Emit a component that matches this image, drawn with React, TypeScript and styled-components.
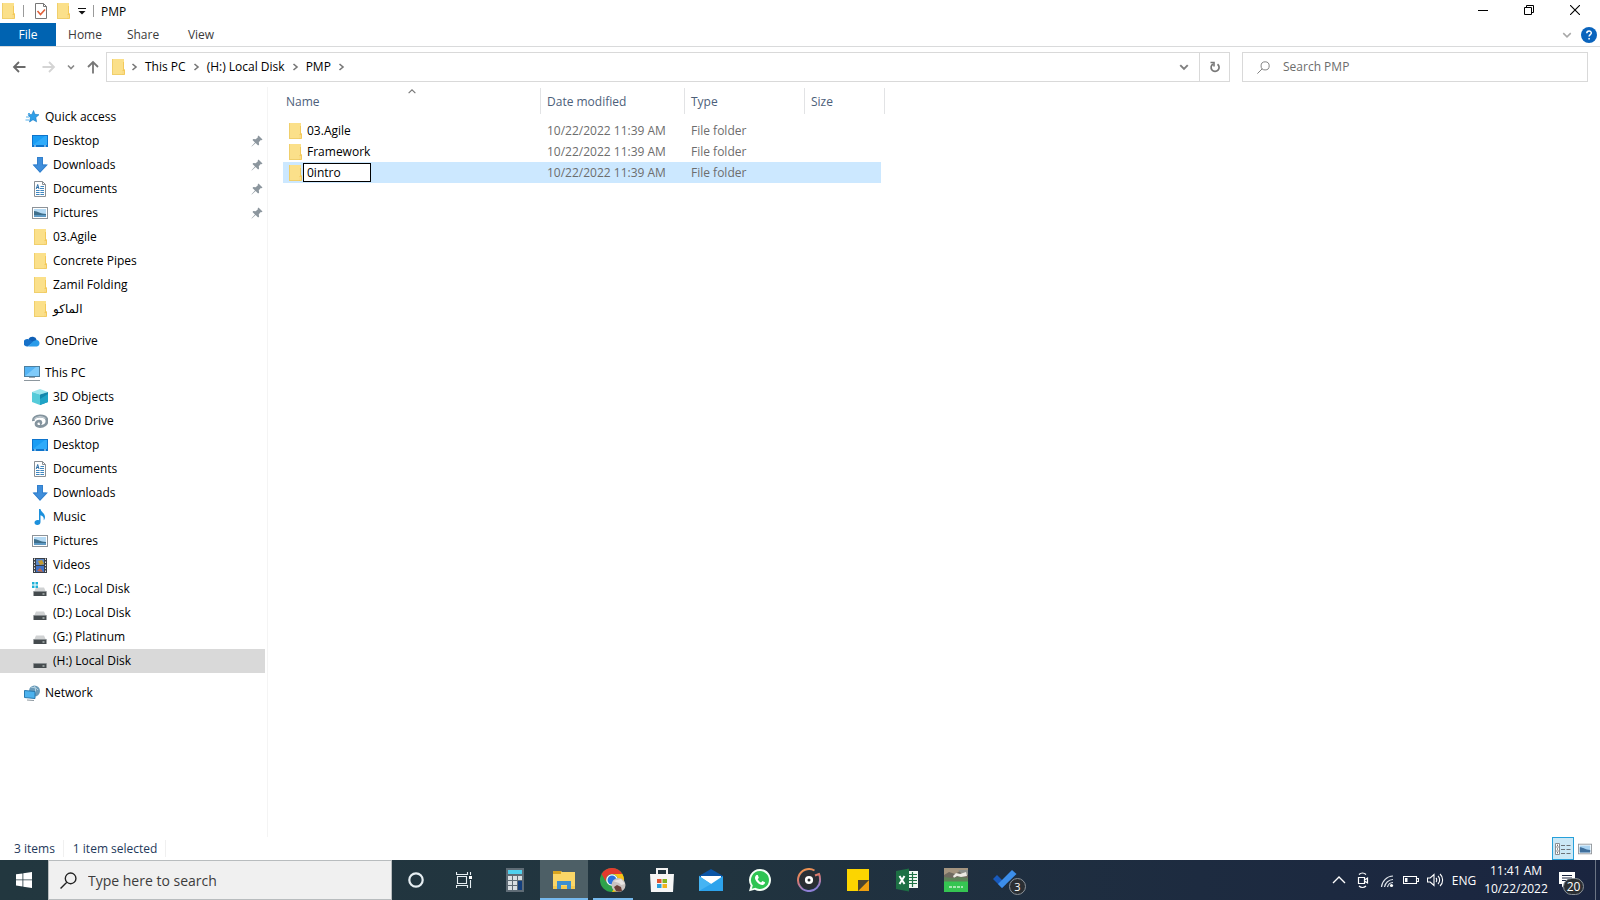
import React from "react";
import styled, { createGlobalStyle } from "styled-components";

const GlobalStyle = createGlobalStyle`
  * { box-sizing: border-box; }
  body { margin: 0; background: #fff; }
  body, button, input { font-family: "Open Sans", "Noto Sans", "DejaVu Sans", sans-serif; font-size: 12px; }
  button { border: 0; padding: 0; background: transparent; color: inherit; }
  svg { display: block; flex: none; }
`;

/* ---------- icons ---------- */

const FolderIcon = () => (
  <svg width="16" height="16" viewBox="0 0 16 16">
    <path d="M2 0h12v10.500h1V16H2z" fill="#fbe08a" />
    <path d="M2 0h1v16H2zM2 15h12v1H2z" fill="#f0cf6c" />
    <path d="M13 3v8l-1 1v3.500h3v-5h-1V3z" fill="#f3c95a" />
    <path d="M12.500 12h1v3h-1z" fill="#ffeeb5" />
  </svg>
);

const Icon16 = ({ children }: { children: React.ReactNode }) => (
  <svg width="16" height="16" viewBox="0 0 16 16">{children}</svg>
);

const StarIcon = () => (
  <Icon16>
    <path d="M9.500 1.500l1.400 3.800 4.100.4-3.200 2.800.8 4.300-3.600-2.100L5.500 13l.9-4.200-2.300-3.100 3.800-.3z" fill="#2f9fe8" stroke="#1579c2" strokeWidth=".6" />
    <path d="M2 8h3M1.500 11h3.500M4 4.500h2" stroke="#55b1ec" strokeWidth="1.200" />
  </Icon16>
);
const DesktopIcon = () => (
  <Icon16>
    <rect y="2" width="16" height="12" fill="#0e74cc" />
    <rect x="1" y="3" width="14" height="9" fill="#1a9df4" />
    <path d="M1 12L13 3h2v9z" fill="#2fabfa" />
    <path d="M2 13h2M12 13h2" stroke="#cfe9fb" />
  </Icon16>
);
const DownloadIcon = () => (
  <Icon16>
    <path d="M5 0h6v7.500h5L8 16 .5 7.500H5z" fill="#3f8edb" />
    <path d="M5.500.5h5V8h4L8 15 1.600 8h3.900z" fill="none" stroke="#2f7bc8" strokeWidth=".8" />
  </Icon16>
);
const DocumentIcon = () => (
  <Icon16>
    <path d="M2.500.5h8l3 3v12h-11z" fill="#fdfdfd" stroke="#8a8f94" />
    <path d="M10.500.5v3h3" fill="none" stroke="#8a8f94" />
    <path d="M8.500 5.500H12M8 7.500h4M4 9.500h8M4 11.500h8M4 13.500h8" stroke="#3f86bf" />
    <path d="M4.200 8l1.500-4.500L7 8M4.800 6.500h2" stroke="#2b6ea8" fill="none" />
    <path d="M8 9v5" stroke="#fdfdfd" strokeWidth=".8" />
  </Icon16>
);
const PictureIcon = () => (
  <Icon16>
    <rect x=".5" y="2.500" width="15" height="11" fill="#fff" stroke="#8d9399" />
    <rect x="2" y="4" width="12" height="8" fill="#b5daf4" />
    <path d="M2 6c4 0 6 3 12 3v3H2z" fill="#3f6f8c" />
    <path d="M2 10h12v2H2z" fill="#5f9ac4" />
  </Icon16>
);
const OneDriveIcon = () => (
  <Icon16>
    <path d="M4.500 6a4.500 4.500 0 0 1 8.300 1.200L8 11z" fill="#0f5fb5" />
    <path d="M4 6a3.800 3.800 0 1 0-.3 7.500L10 9z" fill="#1671c9" />
    <path d="M12.600 7a3.300 3.300 0 0 1 .3 6.500H4L9.500 8z" fill="#2a9cea" />
  </Icon16>
);
const ComputerIcon = () => (
  <Icon16>
    <rect x=".5" y="1.500" width="15" height="10" fill="#54b4f5" stroke="#4d7f9f" />
    <path d="M1 11L12 2h3v9z" fill="#7fcbfa" />
    <path d="M5 12.500h6" stroke="#9aa5ad" />
    <path d="M0 15.500h16" stroke="#8d979e" />
  </Icon16>
);
const CubeIcon = () => (
  <Icon16>
    <path d="M0 3l8-3 8 3-8 2.500z" fill="#9be6ee" />
    <path d="M0 3l8 2.500V16l-8-3z" fill="#55cbd9" />
    <path d="M16 3L8 5.500V16l8-3z" fill="#1287ac" />
    <path d="M8 10l8-5v8l-8 3z" fill="#1fa3c6" />
  </Icon16>
);
const DriveLoopIcon = () => (
  <Icon16>
    <path d="M1.500 8C1 5 4 3 8 3c4.500 0 7 2 7 5 0 3.200-3 5.500-7 5.500-2.500 0-4-1-4-2.700C4 8.800 6 8 7.500 8.200c1.800.3 1.800 2.200.3 2.600" fill="none" stroke="#84949e" strokeWidth="2.800" />
    <path d="M2 6.500C4 3.500 9 2.500 13.500 5.500" fill="none" stroke="#c2ccd2" strokeWidth="1.200" />
  </Icon16>
);
const MusicIcon = () => (
  <Icon16>
    <path d="M7 0h1.500c.3 3 4.500 4 4.500 8 0 1.500-.6 2.600-1.300 3.300.6-3-1-4.300-3.200-5V13c0 1.700-1.300 3-3.200 3S2.500 15 2.500 13.500 4 11 5.500 11c.6 0 1.100.1 1.500.3z" fill="#1c90dc" />
  </Icon16>
);
const VideoIcon = () => (
  <Icon16>
    <rect x="1" y="1" width="14" height="15" fill="#3a3f45" />
    <path d="M2.500 1.500v14M13.500 1.500v14" stroke="#e4e6e8" strokeDasharray="1.500 1.500" />
    <rect x="4" y="2" width="8" height="6" fill="#5a87c6" />
    <rect x="4" y="9" width="8" height="6" fill="#3f72c8" />
    <path d="M6 4l4-1 2 4-4 1z" fill="#c49a2e" />
    <path d="M5 14l3-3 3 4z" fill="#c4683f" />
  </Icon16>
);
const DiskIcon = ({ windows = false, low = false }: { windows?: boolean; low?: boolean }) => (
  <Icon16>
    {!low && <path d="M4 6.500h8L14 11H2z" fill="#d0d2d3" />}
    <path d="M1.500 10.500h13V15h-13z" fill="#454b4e" />
    <path d="M1.500 10.500h13" stroke="#8a8f92" />
    <path d="M10.500 13h2" stroke="#dfe8e4" />
    {windows && <path d="M0 1h2.500v2.500H0zM3.500 1H6v2.500H3.500zM0 4.500h2.500V7H0zM3.500 4.500H6V7H3.500z" fill="#1fb0d6" />}
  </Icon16>
);
const NetworkIcon = () => (
  <Icon16>
    <circle cx="10.500" cy="6" r="5.500" fill="#6a9ab8" />
    <path d="M7 2c3 1 5 0 7 3M10 .5c2 3 2 6 0 9" stroke="#b8d6e6" fill="none" />
    <path d="M.5 5.500l10.500 1v7l-10.500-1z" fill="#4cb2ee" stroke="#2879ae" />
    <path d="M3 15l7 .5" stroke="#8c979e" />
  </Icon16>
);
const PinIcon = () => (
  <svg width="12" height="12" viewBox="0 0 12 12">
    <path d="M7.500.5l4 4-1 .8-.7-.2-2 2.200.3 2.400-1 .8L4.600 8 .8 11.500l-.3-.3L4 7.400 1.500 5l.8-1 2.400.3L6.900 2.200l-.2-.8z" fill="#8c969e" />
  </svg>
);
const Chevron = ({ size = 8, dir = "right", color = "#777", width = 1.6 }: { size?: number; dir?: "right" | "down" | "up"; color?: string; width?: number }) => {
  const d = { right: "M2.500 1L6 4 2.500 7", down: "M1 2.500L4 5.500 7 2.500", up: "M1 5.500L4 2.500 7 5.500" }[dir];
  return <svg width={size} height={size} viewBox="0 0 8 8"><path d={d} fill="none" stroke={color} strokeWidth={width} /></svg>;
};
const ArrowIcon = ({ dir, color }: { dir: "left" | "right" | "up"; color: string }) => {
  const d = { left: "M13.500 7H2M7 2L2 7l5 5", right: "M.5 7H12M7 2l5 5-5 5", up: "M7 13.500V2M2 7l5-5 5 5" }[dir];
  return <svg width="14" height="14" viewBox="0 0 14 14"><path d={d} fill="none" stroke={color} strokeWidth="1.800" /></svg>;
};
const LensIcon = ({ size, color, width }: { size: number; color: string; width: number }) => (
  <svg width={size} height={size} viewBox="0 0 16 16"><path d="M6.400 9.600L.5 15.500M5 6a5 5 0 1 1 10 0A5 5 0 0 1 5 6z" fill="none" stroke={color} strokeWidth={width} /></svg>
);

/* ---------- window frame ---------- */

const Screen = styled.div`
  min-height: 100vh;
  display: flex;
  flex-direction: column;
  color: #000;
`;
const TitleBar = styled.header`
  height: 23px;
  display: flex;
  align-items: center;
  padding: 0 2px 1px 0;
`;
const Tool = styled.button<{ $w?: number }>`
  width: ${(p) => p.$w ?? 16}px;
  display: flex;
  justify-content: center;
`;
const Rule = styled.span<{ $l: number; $r: number }>`
  width: 1px;
  height: 12px;
  background: #9a9a9a;
  margin: 0 ${(p) => p.$r}px 0 ${(p) => p.$l}px;
`;
const QuickTools = styled.div`
  display: flex;
  align-items: center;
  gap: 6px;
`;
const WindowTitle = styled.h1`
  margin: 0;
  flex: 1;
  font-size: 12px;
  font-weight: 400;
`;
const FrameButton = styled.button`
  width: 46px;
  height: 22px;
  display: flex;
  align-items: center;
  justify-content: center;
  padding-bottom: 2px;
`;
const Ribbon = styled.nav`
  height: 24px;
  display: flex;
  align-items: stretch;
  border-bottom: 1px solid #d9dadb;
  padding-right: 3px;
`;
const RibbonTab = styled.button<{ $active?: boolean }>`
  width: ${(p) => (p.$active ? 56 : 58)}px;
  background: ${(p) => (p.$active ? "#0063b1" : "transparent")};
  color: ${(p) => (p.$active ? "#fff" : "#3b3b3b")};
`;
const RibbonEnd = styled.div`
  margin-left: auto;
  display: flex;
  align-items: center;
  gap: 9px;
`;
const NavBar = styled.div`
  height: 40px;
  display: flex;
  align-items: center;
  padding: 0 12px;
`;
const NavButtons = styled.div`
  width: 94px;
  display: flex;
  align-items: center;
  gap: 11px;
`;
const NavButton = styled.button<{ $spaced?: boolean }>`
  margin-left: ${(p) => (p.$spaced ? 5 : 0)}px;
`;
const AddressBox = styled.div`
  flex: 1;
  height: 30px;
  display: flex;
  align-items: center;
  border: 1px solid #d9d9d9;
  padding-left: 3px;
`;
const Crumbs = styled.ol`
  flex: 1;
  display: flex;
  align-items: center;
  gap: 7px;
  list-style: none;
  margin: 0;
  padding: 0 0 0 4px;
`;
const Crumb = styled.li`
  display: flex;
  align-items: center;
  gap: 6px;
`;
const AddressButton = styled.button<{ $divided?: boolean }>`
  width: 30px;
  height: 28px;
  display: flex;
  align-items: center;
  justify-content: center;
  border-left: ${(p) => (p.$divided ? "1px solid #d9d9d9" : "0")};
`;
const SearchBox = styled.label`
  width: 346px;
  height: 30px;
  margin-left: 12px;
  display: flex;
  align-items: center;
  gap: 13px;
  border: 1px solid #d9d9d9;
  padding-left: 14px;
`;
const SearchInput = styled.input`
  flex: 1;
  min-width: 0;
  border: 0;
  padding: 0 0 2px;
  outline: 0;
  background: transparent;
  &::placeholder { color: #6d6d6d; opacity: 1; }
`;

/* ---------- body ---------- */

const Body = styled.div`
  flex: 1;
  display: flex;
`;
const Sidebar = styled.nav`
  width: 268px;
  padding: 18px 2px 0 0;
  border-right: 1px solid #f4f4f4;
`;
const Group = styled.ul`
  list-style: none;
  margin: 0 0 8px;
  padding: 0;
`;
const TreeItem = styled.li<{ $root?: boolean; $selected?: boolean }>`
  height: 24px;
  display: flex;
  align-items: center;
  gap: 5px;
  padding: 0 2px 0 ${(p) => (p.$root ? 24 : 32)}px;
  background: ${(p) => (p.$selected ? "#d9d9d9" : "transparent")};
`;
const TextLink = styled.a`
  flex: 1;
  padding-bottom: 2px;
  color: inherit;
  text-decoration: none;
`;
const Pane = styled.main`
  flex: 1;
  padding-left: 15px;
`;
const FileTable = styled.table`
  width: 602px;
  table-layout: fixed;
  border-collapse: separate;
  border-spacing: 0;
`;
const HeadCell = styled.th<{ $w: number; $first?: boolean }>`
  position: relative;
  width: ${(p) => p.$w}px;
  height: 33px;
  padding: 0 0 4px ${(p) => (p.$first ? 3 : 6)}px;
  text-align: left;
  font-weight: 400;
  color: #4c607a;
  background: linear-gradient(#e2e3e5, #e2e3e5) right 1px / 1px 26px no-repeat;
`;
const SortMark = styled.span`
  position: absolute;
  top: 0;
  left: 50%;
  transform: translateX(-50%);
`;
const FileRow = styled.tr<{ $selected?: boolean }>`
  height: 21px;
  color: #6d6d6d;
  td { background-color: ${(p) => (p.$selected ? "#cce8ff" : "transparent")}; }
`;
const Cell = styled.td`
  padding: 0 0 0 6px;
  line-height: 20px;
  &:last-child { border-right: 4px solid transparent; background-clip: padding-box; }
`;
const NameCell = styled.div<{ $editing?: boolean }>`
  display: flex;
  align-items: center;
  gap: ${(p) => (p.$editing ? 0 : 4)}px;
  height: 21px;
  margin-left: -2px;
  color: #000;
`;
const RenameInput = styled.input`
  width: 68px;
  height: 19px;
  border: 1px solid #000;
  padding: 0 3px;
  outline: 0;
  background: #fff;
`;
const StatusBar = styled.footer`
  height: 23px;
  display: flex;
  align-items: center;
  padding: 0 4px 0 14px;
  color: #1e395b;
`;
const StatusText = styled.span`
  padding-right: 8px;
  margin-right: 9px;
  border-right: 1px solid #f0f0f0;
`;
const ViewButtons = styled.div`
  margin-left: auto;
  display: flex;
  align-items: center;
`;
const ViewButton = styled.button<{ $on?: boolean }>`
  width: 22px;
  height: 23px;
  display: flex;
  align-items: center;
  justify-content: center;
  border: ${(p) => (p.$on ? "1px solid #26a0da" : "0")};
  background: ${(p) => (p.$on ? "#cbe8f6" : "transparent")};
`;

/* ---------- taskbar ---------- */

const Taskbar = styled.div`
  height: 40px;
  display: flex;
  align-items: stretch;
  background: linear-gradient(90deg, #22373f 0%, #21343f 45%, #1d2b40 75%, #1a2540 100%);
  color: #fff;
`;
const TaskButton = styled.button<{ $active?: boolean }>`
  position: relative;
  width: 48px;
  display: flex;
  align-items: center;
  justify-content: center;
  background: ${(p) => (p.$active ? "#4d5f66" : "transparent")};
`;
const Running = styled.span<{ $inset: number }>`
  position: absolute;
  bottom: 0;
  left: ${(p) => p.$inset}px;
  right: ${(p) => p.$inset}px;
  height: 2px;
  background: #76b9ed;
`;
const TaskSearch = styled.label`
  width: 344px;
  display: flex;
  align-items: center;
  gap: 11px;
  padding-left: 11px;
  background: #f0f0f0;
  border: 1px solid #b8bcbe;
`;
const TaskSearchInput = styled(SearchInput)`
  padding: 0;
  font-size: 14px;
  &::placeholder { color: #3c3c3c; opacity: 1; }
`;
const Apps = styled.div`
  display: flex;
  gap: 1px;
  margin-left: 3px;
`;
const Badge = styled.span<{ $wide?: boolean }>`
  position: absolute;
  left: ${(p) => (p.$wide ? 12 : 28)}px;
  top: 18px;
  min-width: ${(p) => (p.$wide ? 21 : 17)}px;
  height: 17px;
  border: 1px solid #8b9299;
  border-radius: 9px;
  background: #2b2f33;
  font-size: ${(p) => (p.$wide ? 12 : 11)}px;
  line-height: 15px;
  text-align: center;
`;
const Tray = styled.div`
  margin-left: auto;
  display: flex;
  align-items: stretch;
`;
const TrayButton = styled.button<{ $w?: number }>`
  position: relative;
  width: ${(p) => p.$w ?? 24}px;
  display: flex;
  align-items: center;
  justify-content: center;
`;
const NoticeButton = styled(TrayButton)`
  width: 32px;
  margin-right: 12px;
`;
const Clock = styled.time`
  width: 70px;
  display: flex;
  flex-direction: column;
  justify-content: center;
  text-align: center;
  line-height: 18px;
`;
const ShowDesktop = styled.button`
  width: 5px;
  border-left: 1px solid #6b7484;
`;

type Node = { label: string; icon: React.ReactNode; pinned?: boolean; selected?: boolean };

const groups: Node[][] = [
  [
    { label: "Quick access", icon: <StarIcon /> },
    { label: "Desktop", icon: <DesktopIcon />, pinned: true },
    { label: "Downloads", icon: <DownloadIcon />, pinned: true },
    { label: "Documents", icon: <DocumentIcon />, pinned: true },
    { label: "Pictures", icon: <PictureIcon />, pinned: true },
    { label: "03.Agile", icon: <FolderIcon /> },
    { label: "Concrete Pipes", icon: <FolderIcon /> },
    { label: "Zamil Folding", icon: <FolderIcon /> },
    { label: "الماكو", icon: <FolderIcon /> },
  ],
  [{ label: "OneDrive", icon: <OneDriveIcon /> }],
  [
    { label: "This PC", icon: <ComputerIcon /> },
    { label: "3D Objects", icon: <CubeIcon /> },
    { label: "A360 Drive", icon: <DriveLoopIcon /> },
    { label: "Desktop", icon: <DesktopIcon /> },
    { label: "Documents", icon: <DocumentIcon /> },
    { label: "Downloads", icon: <DownloadIcon /> },
    { label: "Music", icon: <MusicIcon /> },
    { label: "Pictures", icon: <PictureIcon /> },
    { label: "Videos", icon: <VideoIcon /> },
    { label: "(C:) Local Disk", icon: <DiskIcon windows /> },
    { label: "(D:) Local Disk", icon: <DiskIcon /> },
    { label: "(G:) Platinum", icon: <DiskIcon /> },
    { label: "(H:) Local Disk", icon: <DiskIcon low />, selected: true },
  ],
  [{ label: "Network", icon: <NetworkIcon /> }],
];

const files = [
  { name: "03.Agile" },
  { name: "Framework" },
  { name: "0intro", editing: true },
];

const App24 = ({ children }: { children: React.ReactNode }) => (
  <svg width="24" height="24" viewBox="0 0 24 24">{children}</svg>
);

const apps: { name: string; icon: React.ReactNode; active?: boolean; running?: number; badge?: string }[] = [
  {
    name: "Calculator",
    icon: (
      <App24>
        <rect x="3" width="18" height="24" fill="#5f6c76" />
        <rect x="5" y="2" width="14" height="4" fill="#4fd0ee" />
        <path d="M5 8h4v4H5zM10 8h4v4h-4zM15 8h4v4h-4zM5 13h4v4H5zM10 13h4v4h-4zM5 18h4v4H5zM10 18h4v4h-4z" fill="#d9dfe3" />
        <rect x="15" y="13" width="4" height="9" fill="#143f7d" />
      </App24>
    ),
  },
  {
    name: "File Explorer",
    active: true,
    running: 0,
    icon: (
      <App24>
        <path d="M1 3h8l1 1h13v17H1z" fill="#fbd667" />
        <path d="M1 3h8v3H1z" fill="#d9a520" />
        <path d="M5 13h14v8h-4v-4H9v4H5z" fill="#3d8fd1" />
        <path d="M1 18h4v3H1zM19 18h4v3h-4zM9 18h6v3H9z" fill="#f5c94e" />
      </App24>
    ),
  },
  {
    name: "Chrome",
    running: 4,
    icon: (
      <svg width="26" height="24" viewBox="0 0 26 24">
        <circle cx="12" cy="12" r="12" fill="#2ea24b" />
        <path d="M1.600 6A12 12 0 0 1 22.400 6H12a6 6 0 0 0-5.200 9z" fill="#e33b2e" />
        <path d="M22.400 6A12 12 0 0 1 12 24l5.200-9A6 6 0 0 0 12 6z" fill="#fbc116" />
        <circle cx="12" cy="12" r="5.800" fill="#fff" />
        <circle cx="12" cy="12" r="4.500" fill="#2a73e0" />
        <circle cx="18.500" cy="17" r="7" fill="#c9c3c1" />
        <path d="M13 13l8-2 4 5-4 1-2-2z" fill="#e8e5e3" />
        <path d="M14 19l3-2 4 2 1 4-3 .8-3-.8z" fill="#6a4038" />
      </svg>
    ),
  },
  {
    name: "Microsoft Store",
    icon: (
      <App24>
        <path d="M7 6V1h10v5" fill="none" stroke="#f2f2f2" strokeWidth="2" />
        <path d="M0 6h24l-1 18H1z" fill="#f6f6f6" />
        <path d="M7 11h4.500v4H7z" fill="#e2532f" />
        <path d="M12.500 11H17v4h-4.500z" fill="#82b41f" />
        <path d="M7 16h4.500v4H7z" fill="#2aa0dc" />
        <path d="M12.500 16H17v4h-4.500z" fill="#f3b31d" />
      </App24>
    ),
  },
  {
    name: "Mail",
    icon: (
      <App24>
        <path d="M0 8l12-7 12 7v15H0z" fill="#0a54a5" />
        <path d="M2 8h20v8H2z" fill="#fff" />
        <path d="M0 8l12 8L24 8v15H0z" fill="#2da3ec" />
        <path d="M0 8l12 8-12 7z" fill="#45b4f3" />
      </App24>
    ),
  },
  {
    name: "WhatsApp",
    icon: (
      <App24>
        <path d="M12 1a11 11 0 1 1-5.200 20.700L1 23.200l1.600-5.600A11 11 0 0 1 12 1z" fill="#f5fff7" />
        <path d="M12 3a9 9 0 1 1-4.700 16.700l-3.500 1 1-3.300A9 9 0 0 1 12 3z" fill="#2fc453" />
        <path d="M8.500 7l1.300 0 1 2.700-1.100 1.500c.8 1.600 1.900 2.500 3.400 3.200l1.300-1.400 2.600 1.200c.2 1.800-1.300 2.800-2.600 2.800-3.700-.3-7.100-4-7.400-7 0-1.300.7-2.400 1.500-3z" fill="#fff" />
      </App24>
    ),
  },
  {
    name: "Music",
    icon: (
      <App24>
        <defs>
          <linearGradient id="ring" x1="0" y1="0" x2=".3" y2="1">
            <stop offset="0" stopColor="#f49a4a" />
            <stop offset=".5" stopColor="#d9796f" />
            <stop offset="1" stopColor="#8d7fd6" />
          </linearGradient>
        </defs>
        <circle cx="12" cy="12" r="9" fill="#2b2e33" />
        <path d="M17.500 2.500A11 11 0 1 0 23 11c0-2-.3-3.500-1-5l-4 1.500" fill="none" stroke="url(#ring)" strokeWidth="2" />
        <circle cx="12" cy="12" r="2.800" fill="none" stroke="#fff" strokeWidth="2.600" />
      </App24>
    ),
  },
  {
    name: "Sticky Notes",
    icon: (
      <App24>
        <path d="M1 1h22v11l-11 11H1z" fill="#fcd500" />
        <path d="M23 12v11H12z" fill="#eea010" />
        <path d="M12 12h11L12 23z" fill="#4b4430" />
      </App24>
    ),
  },
  {
    name: "Excel",
    icon: (
      <App24>
        <rect x="12" y="3" width="11" height="17" fill="#f1f8f3" />
        <path d="M13 6.500h9M13 9.500h9M13 12.500h9M13 15.500h9M17.500 4v15" stroke="#217346" strokeWidth="1.200" />
        <path d="M1 3l13-2.500v23L1 21z" fill="#1d7044" />
        <path d="M4.500 8l5 8M9.500 8l-5 8" stroke="#fff" strokeWidth="2" />
      </App24>
    ),
  },
  {
    name: "Garden photo",
    icon: (
      <App24>
        <rect width="24" height="24" fill="#6f6a60" />
        <path d="M0 0h24v4l-8-1-5 3-6-2-5 3z" fill="#a49580" />
        <path d="M14 2h10v5l-6-1z" fill="#8b8f8a" />
        <path d="M9 8l3-3 4 1 6-2 1 4-6 1-4-1-3 2z" fill="#eceae4" />
        <path d="M0 9l8 1 8-1 8 1v4H0z" fill="#5f8259" />
        <path d="M0 13.500h24V24H0z" fill="#35c552" />
        <path d="M5 19h14" stroke="#c9f2ce" strokeWidth="1.500" strokeDasharray="3 1" />
      </App24>
    ),
  },
  {
    name: "To Do",
    badge: "3",
    icon: (
      <App24>
        <path d="M0 11l4-4 9 9-4 4z" fill="#185abd" />
        <path d="M9 20l-4-4L19 2l4.500 4z" fill="#3c8eea" />
      </App24>
    ),
  },
];

export default function App() {
  return (
    <Screen>
      <GlobalStyle />
      <TitleBar>
        <FolderIcon />
        <Rule $l={7} $r={9} />
        <QuickTools>
          <Tool aria-label="Properties">
            <Icon16>
              <path d="M2.500.5h8l3 3v12h-11z" fill="#fff" stroke="#777" />
              <path d="M10.500.5v3h3" fill="none" stroke="#777" />
              <path d="M4.500 8l3 3.500 4.500-5" fill="none" stroke="#e0603a" strokeWidth="1.600" />
            </Icon16>
          </Tool>
          <Tool aria-label="New folder"><FolderIcon /></Tool>
          <Tool aria-label="Customize" $w={10}>
            <svg width="8" height="8" viewBox="0 0 8 8"><path d="M0 1.500h8" stroke="#111" /><path d="M.5 4h7L4 7.500z" fill="#111" /></svg>
          </Tool>
        </QuickTools>
        <Rule $l={6} $r={7} />
        <WindowTitle>PMP</WindowTitle>
        <FrameButton aria-label="Minimize"><svg width="10" height="10" viewBox="0 0 10 10"><path d="M0 5.500h10" stroke="#000" /></svg></FrameButton>
        <FrameButton aria-label="Restore"><svg width="10" height="10" viewBox="0 0 10 10"><path d="M.5 2.500h7v7h-7zM2.500 2.500v-2h7v7h-2" fill="none" stroke="#000" /></svg></FrameButton>
        <FrameButton aria-label="Close"><svg width="10" height="10" viewBox="0 0 10 10"><path d="M0 0l10 10M10 0L0 10" stroke="#000" strokeWidth="1.100" /></svg></FrameButton>
      </TitleBar>
      <Ribbon>
        <RibbonTab $active>File</RibbonTab>
        <RibbonTab>Home</RibbonTab>
        <RibbonTab>Share</RibbonTab>
        <RibbonTab>View</RibbonTab>
        <RibbonEnd>
          <button aria-label="Expand ribbon"><Chevron size={10} dir="down" color="#a8a8a8" width={1.2} /></button>
          <button aria-label="Help">
            <Icon16>
              <circle cx="8" cy="8" r="8" fill="#0a64bd" />
              <path d="M5.800 6.300c0-3 4.500-3 4.500-.3 0 1.600-2.200 1.600-2.200 3.500M8.100 11v1.600" fill="none" stroke="#fff" strokeWidth="1.500" />
            </Icon16>
          </button>
        </RibbonEnd>
      </Ribbon>
      <NavBar>
        <NavButtons>
          <NavButton aria-label="Back"><ArrowIcon dir="left" color="#6a6a6a" /></NavButton>
          <NavButton aria-label="Forward" $spaced><ArrowIcon dir="right" color="#d4d4d4" /></NavButton>
          <NavButton aria-label="Recent locations"><Chevron dir="down" color="#888" /></NavButton>
          <NavButton aria-label="Up"><ArrowIcon dir="up" color="#777" /></NavButton>
        </NavButtons>
        <AddressBox>
          <FolderIcon />
          <Crumbs>
            <Chevron />
            {["This PC", "(H:) Local Disk", "PMP"].map((c) => (
              <Crumb key={c}><TextLink href="#">{c}</TextLink><Chevron /></Crumb>
            ))}
          </Crumbs>
          <AddressButton aria-label="Previous locations"><Chevron size={10} dir="down" color="#808080" width={1.6} /></AddressButton>
          <AddressButton aria-label="Refresh" $divided>
            <svg width="12" height="12" viewBox="0 0 12 12"><path d="M4 3A4 4 0 1 0 8.500 3.200" fill="none" stroke="#777" strokeWidth="1.700" /><path d="M1.500 1.500H5v4" fill="none" stroke="#777" strokeWidth="1.600" /></svg>
          </AddressButton>
        </AddressBox>
        <SearchBox>
          <LensIcon size={13} color="#808080" width={1.2} />
          <SearchInput aria-label="Search PMP" placeholder="Search PMP" />
        </SearchBox>
      </NavBar>

      <Body>
        <Sidebar aria-label="Folders">
          {groups.map((g, gi) => (
            <Group key={gi}>
              {g.map((n, i) => (
                <TreeItem key={i} $root={i === 0} $selected={n.selected}>
                  {n.icon}
                  <TextLink href="#">{n.label}</TextLink>
                  {n.pinned && <PinIcon />}
                </TreeItem>
              ))}
            </Group>
          ))}
        </Sidebar>
        <Pane>
          <FileTable>
            <thead>
              <tr>
                <HeadCell $w={258} $first>Name<SortMark><Chevron size={9} dir="up" color="#777" width={1} /></SortMark></HeadCell>
                <HeadCell $w={144}>Date modified</HeadCell>
                <HeadCell $w={120}>Type</HeadCell>
                <HeadCell $w={80}>Size</HeadCell>
              </tr>
            </thead>
            <tbody>
              {files.map((f) => (
                <FileRow key={f.name} $selected={f.editing}>
                  <Cell>
                    <NameCell $editing={f.editing}>
                      <FolderIcon />
                      {f.editing ? <RenameInput aria-label="Folder name" defaultValue={f.name} /> : f.name}
                    </NameCell>
                  </Cell>
                  <Cell>10/22/2022 11:39 AM</Cell>
                  <Cell>File folder</Cell>
                  <Cell />
                </FileRow>
              ))}
            </tbody>
          </FileTable>
        </Pane>
      </Body>

      <StatusBar>
        <StatusText>3 items</StatusText>
        <StatusText>1 item selected</StatusText>
        <ViewButtons>
          <ViewButton aria-label="Details view" $on>
            <Icon16>
              <path d="M.5 2.500h4v11h-4zM.5 6h4M.5 10h4" fill="#fff" stroke="#8a8f94" />
              <path d="M2 4.200h1M2 8h1M2 11.800h1" stroke="#333" />
              <path d="M6 4.500h4M11.500 4.500h4M6 8.500h4M11.500 8.500h4M6 12.500h4M11.500 12.500h4" stroke="#6b7278" />
            </Icon16>
          </ViewButton>
          <ViewButton aria-label="Thumbnail view">
            <svg width="14" height="14" viewBox="0 0 16 16"><rect x=".5" y="2.500" width="15" height="11" fill="#fff" stroke="#8d9399" /><rect x="2" y="4" width="12" height="8" fill="#a9d3f2" /><path d="M2 6c4 0 6 3 12 3v3H2z" fill="#3f6f9c" /></svg>
          </ViewButton>
        </ViewButtons>
      </StatusBar>

      <Taskbar>
        <TaskButton aria-label="Start">
          <Icon16><path d="M0 2.300l6.500-.9v6H0zM7.300 1.300L16 0v7.400H7.300zM0 8.300h6.500v6.100L0 13.500zM7.300 8.300H16V16l-8.700-1.300z" fill="#fff" /></Icon16>
        </TaskButton>
        <TaskSearch>
          <LensIcon size={17} color="#222" width={1.3} />
          <TaskSearchInput aria-label="Search Windows" placeholder="Type here to search" />
        </TaskSearch>
        <TaskButton aria-label="Cortana"><Icon16><circle cx="8" cy="8" r="6.700" fill="none" stroke="#e6eef2" strokeWidth="2.200" /></Icon16></TaskButton>
        <TaskButton aria-label="Task View">
          <Icon16><path d="M1.500 4.500h9v7h-9zM.5 0v2.500h11V0M.5 16v-2.500h11V16M14.500 0v3M14.500 8v8" fill="none" stroke="#e6eef2" strokeWidth="1.100" /><path d="M13 4h3v3h-3z" fill="#fff" /></Icon16>
        </TaskButton>
        <Apps>
          {apps.map((a) => (
            <TaskButton key={a.name} aria-label={a.name} $active={a.active}>
              {a.icon}
              {a.running !== undefined && <Running $inset={a.running} />}
              {a.badge && <Badge>{a.badge}</Badge>}
            </TaskButton>
          ))}
        </Apps>
        <Tray>
          <TrayButton aria-label="Show hidden icons"><svg width="14" height="14" viewBox="0 0 14 14"><path d="M1 10l6-6 6 6" fill="none" stroke="#fff" strokeWidth="1.400" /></svg></TrayButton>
          <TrayButton aria-label="Meet Now">
            <Icon16><path d="M3.500 5.500h6v6h-6zM9.500 8l3-2v5l-3-2M4 2.500C6 .6 9 .6 11 2.500M4 14c2 1.800 5 1.800 7 0" fill="none" stroke="#fff" strokeWidth="1.200" /></Icon16>
          </TrayButton>
          <TrayButton aria-label="Wi-Fi">
            <Icon16><path d="M2.500 15A12 12 0 0 1 14 4M5.500 15A9 9 0 0 1 14 7.500M8.500 15A6 6 0 0 1 14 10.500" fill="none" stroke="#dfe4ea" strokeWidth="1.200" /><circle cx="12.500" cy="13.500" r="1.600" fill="#fff" /></Icon16>
          </TrayButton>
          <TrayButton aria-label="Battery">
            <Icon16><path d="M.5 4.500h13v7H.5zM13.500 6.500h2v3h-2" fill="none" stroke="#fff" strokeWidth="1.100" /><path d="M2 6h2.500v4H2z" fill="#fff" /></Icon16>
          </TrayButton>
          <TrayButton aria-label="Volume">
            <svg width="17" height="16" viewBox="0 0 17 16"><path d="M.5 6h2.700L7 2.500v11L3.200 10H.5zM9 6c1 1 1 3 0 4M11 4c2.200 2 2.200 6 0 8M13 2c3.500 3 3.500 9 0 12" fill="none" stroke="#fff" strokeWidth="1.100" /></svg>
          </TrayButton>
          <TrayButton $w={34}>ENG</TrayButton>
          <Clock><span>11:41 AM</span><span>10/22/2022</span></Clock>
          <NoticeButton aria-label="Notifications">
            <Icon16><path d="M0 0h16v12H6l-3 3.500V12H0z" fill="#fff" /><path d="M3 3.500h10M3 6h10M3 8.500h7" stroke="#1a2540" /></Icon16>
            <Badge $wide>20</Badge>
          </NoticeButton>
          <ShowDesktop aria-label="Show desktop" />
        </Tray>
      </Taskbar>
    </Screen>
  );
}
